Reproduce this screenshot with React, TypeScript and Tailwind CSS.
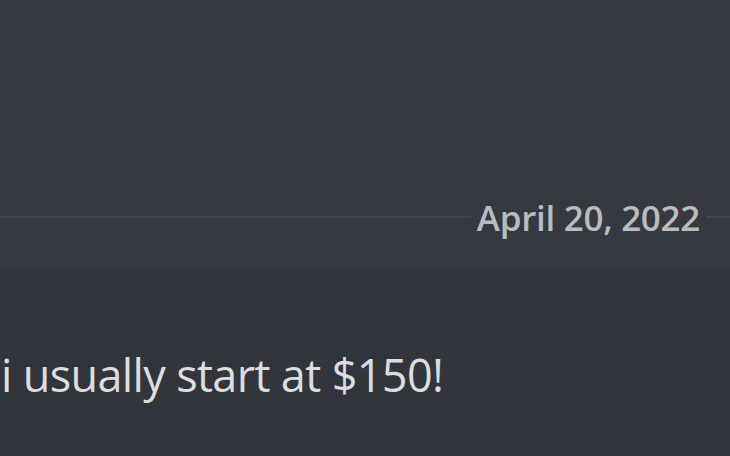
export default function App() {
  return (
    <div className="w-[730px] h-[456px] overflow-hidden flex flex-col bg-[#36393f]" style={{ fontFamily: '"Open Sans", "Noto Sans", sans-serif' }}>
      <div className="h-[270px] shrink-0 flex flex-col justify-end pb-[36px]">
        <div className="flex items-center h-[34px]">
          <div className="flex-1 h-[2px] bg-[#42474e]" />
          <span className="px-[6px] text-[35px] font-semibold leading-none text-[#b9bbbe] tracking-[-0.3px]">April 20, 2022</span>
          <div className="w-[24px] h-[2px] bg-[#42474e]" />
        </div>
      </div>
      <div className="flex-1 bg-[#32353b] pl-[1px] pt-[82px]">
        <div className="text-[45px] leading-none text-[#dcddde] tracking-[-0.65px] whitespace-nowrap">i usually start at $150!</div>
      </div>
    </div>
  );
}
